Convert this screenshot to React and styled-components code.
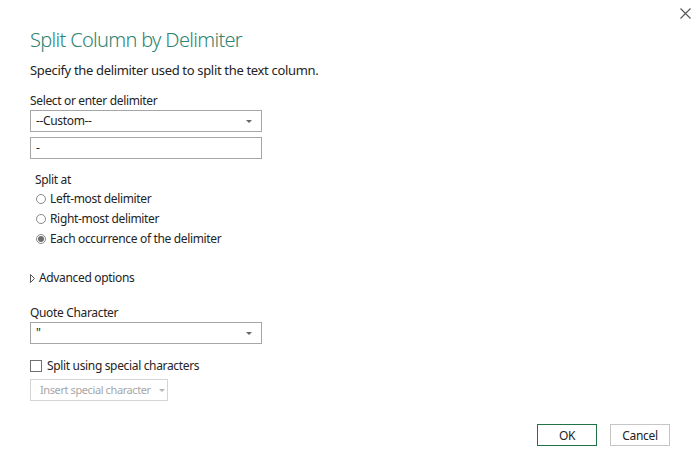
import React, { useState } from 'react';
import styled, { createGlobalStyle } from 'styled-components';

const GlobalStyle = createGlobalStyle`
  html, body {
    margin: 0;
    padding: 0;
    background: #fff;
  }
  body {
    font-family: "Segoe UI", "Noto Sans", sans-serif;
    color: #252423;
  }
`;

const Dialog = styled.div`
  position: relative;
  width: 700px;
  height: 476px;
  box-sizing: border-box;
  padding: 27px 30px 30px;
  display: flex;
  flex-direction: column;
  background: #fff;
  font-size: 12px;
  line-height: 16px;
  letter-spacing: -0.34px;
`;

const CloseButton = styled.button`
  position: absolute;
  top: 6px;
  right: 8px;
  width: 14px;
  height: 14px;
  padding: 0;
  border: 0;
  background: none;
  display: flex;
  align-items: center;
  justify-content: center;
`;

const Title = styled.h1`
  margin: 0;
  font-size: 20px;
  line-height: 26px;
  font-weight: 300;
  letter-spacing: -0.68px;
  color: #2f8470;
`;

const Subtitle = styled.p`
  margin: 8px 0 0;
  font-size: 13px;
  line-height: 18px;
  letter-spacing: -0.33px;
`;

const Label = styled.div`
  margin-top: ${(p) => p.$top || 0}px;
  padding-left: ${(p) => p.$indent || 0}px;
`;

const Box = styled.div`
  margin-top: ${(p) => p.$top || 0}px;
  width: 232px;
  height: 22px;
  box-sizing: border-box;
  border: 1px solid #a6a6a6;
  display: flex;
  align-items: center;
  justify-content: space-between;
  padding: 0 9px 0 5px;
  background: #fff;
`;

const Caret = styled.span`
  width: 0;
  height: 0;
  border-left: 3px solid transparent;
  border-right: 3px solid transparent;
  border-top: 3px solid ${(p) => p.$color || '#666'};
`;

const RadioGroup = styled.div`
  margin-top: 1px;
  padding-left: 6px;
  display: flex;
  flex-direction: column;
`;

const RadioRow = styled.label`
  height: 20px;
  display: flex;
  align-items: center;
  gap: 4px;
`;

const RadioCircle = styled.span`
  width: 10px;
  height: 10px;
  box-sizing: border-box;
  border-radius: 50%;
  border: 1px solid #8a8a8a;
  display: flex;
  align-items: center;
  justify-content: center;
  &::after {
    content: '';
    width: 6px;
    height: 6px;
    border-radius: 50%;
    background: ${(p) => (p.$checked ? '#6e6e6e' : 'transparent')};
  }
`;

const Expander = styled.div`
  margin-top: 21px;
  display: flex;
  align-items: center;
  gap: 4px;
`;

const CheckRow = styled.label`
  margin-top: 14px;
  display: flex;
  align-items: center;
  gap: 5px;
`;

const CheckBox = styled.span`
  width: 12px;
  height: 12px;
  box-sizing: border-box;
  border: 1px solid #707070;
  background: #fff;
`;

const SpecialButton = styled.div`
  margin-top: 5px;
  width: 138px;
  height: 22px;
  box-sizing: border-box;
  border: 1px solid #d4d4d4;
  display: flex;
  align-items: center;
  gap: 8px;
  padding-left: 9px;
  white-space: nowrap;
  color: #a6a6a6;
  font-size: 11px;
  letter-spacing: -0.4px;
`;

const Footer = styled.div`
  margin-top: auto;
  display: flex;
  justify-content: flex-end;
  gap: 13px;
`;

const Button = styled.button`
  width: 60px;
  height: 22px;
  padding: 0;
  background: #fff;
  font-family: inherit;
  font-size: 12px;
  letter-spacing: -0.3px;
  color: #252423;
  border: 1px solid ${(p) => (p.$primary ? '#217346' : '#c6c6c6')};
`;

const options = ['Left-most delimiter', 'Right-most delimiter', 'Each occurrence of the delimiter'];

export default function App() {
  const [splitAt, setSplitAt] = useState(2);

  return (
    <>
      <GlobalStyle />
      <Dialog>
        <CloseButton aria-label="Close">
          <svg width="11" height="11" viewBox="0 0 11 11">
            <path d="M0.5 0.5 L10.5 10.5 M10.5 0.5 L0.5 10.5" stroke="#555" strokeWidth="1.1" />
          </svg>
        </CloseButton>

        <Title>Split Column by Delimiter</Title>
        <Subtitle>Specify the delimiter used to split the text column.</Subtitle>

        <Label $top={14}>Select or enter delimiter</Label>
        <Box $top={1}>
          <span>--Custom--</span>
          <Caret />
        </Box>
        <Box $top={5}>
          <span>-</span>
        </Box>

        <Label $top={13} $indent={5}>Split at</Label>
        <RadioGroup>
          {options.map((o, i) => (
            <RadioRow key={o} onClick={() => setSplitAt(i)}>
              <RadioCircle $checked={splitAt === i} />
              {o}
            </RadioRow>
          ))}
        </RadioGroup>

        <Expander>
          <svg width="5" height="9" viewBox="0 0 5 9">
            <path d="M0.5 0.5 L4.5 4.5 L0.5 8.5 Z" fill="none" stroke="#555" strokeWidth="1" />
          </svg>
          Advanced options
        </Expander>

        <Label $top={19}>Quote Character</Label>
        <Box $top={1}>
          <span>"</span>
          <Caret />
        </Box>

        <CheckRow>
          <CheckBox />
          Split using special characters
        </CheckRow>

        <SpecialButton>
          Insert special character
          <Caret $color="#b5b5b5" />
        </SpecialButton>

        <Footer>
          <Button $primary>OK</Button>
          <Button>Cancel</Button>
        </Footer>
      </Dialog>
    </>
  );
}
